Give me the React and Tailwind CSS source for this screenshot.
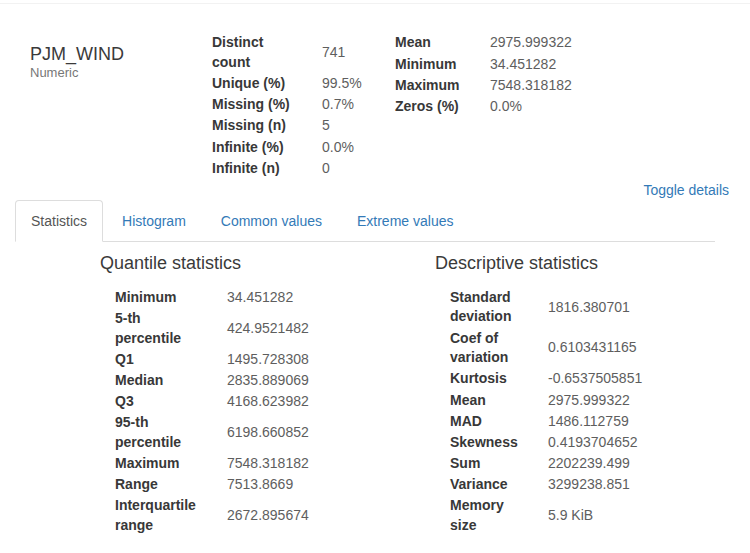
import React from 'react';

const font = { fontFamily: '"Liberation Sans", Arial, sans-serif' };

const overview = [
  ['Distinct count', '741'],
  ['Unique (%)', '99.5%'],
  ['Missing (%)', '0.7%'],
  ['Missing (n)', '5'],
  ['Infinite (%)', '0.0%'],
  ['Infinite (n)', '0'],
];

const summary = [
  ['Mean', '2975.999322'],
  ['Minimum', '34.451282'],
  ['Maximum', '7548.318182'],
  ['Zeros (%)', '0.0%'],
];

const quantiles = [
  ['Minimum', '34.451282'],
  ['5-th percentile', '424.9521482'],
  ['Q1', '1495.728308'],
  ['Median', '2835.889069'],
  ['Q3', '4168.623982'],
  ['95-th percentile', '6198.660852'],
  ['Maximum', '7548.318182'],
  ['Range', '7513.8669'],
  ['Interquartile range', '2672.895674'],
];

const descriptive = [
  ['Standard deviation', '1816.380701'],
  ['Coef of variation', '0.6103431165'],
  ['Kurtosis', '-0.6537505851'],
  ['Mean', '2975.999322'],
  ['MAD', '1486.112759'],
  ['Skewness', '0.4193704652'],
  ['Sum', '2202239.499'],
  ['Variance', '3299238.851'],
  ['Memory size', '5.9 KiB'],
];

// labelClass sets the label column width, which decides where labels wrap
const StatTable = ({ rows, labelClass, className = '' }) => (
  <table className={`text-[14px] leading-[19.5px] ${className}`}>
    <tbody>
      {rows.map(([label, value]) => (
        <tr key={label}>
          <th className={`py-[0.85px] text-left align-middle font-bold text-[#383838] ${labelClass}`}>
            {label}
          </th>
          <td className="py-[0.85px] align-middle text-[#5e5e5e]">{value}</td>
        </tr>
      ))}
    </tbody>
  </table>
);

const tabs = ['Statistics', 'Histogram', 'Common values', 'Extreme values'];

export default function App() {
  return (
    <div className="w-[750px] min-h-[553px] bg-white pt-[3px]" style={font}>
      <div className="border-t border-[#f2f2f2]">
        <div className="flex items-start pt-[28.5px]">
          <div className="w-[212px] pl-[30px] pt-[11px]">
            <div className="text-[18px] leading-[20px] text-[#3a3a3a]">PJM_WIND</div>
            <div className="mt-[0.7px] text-[13px] leading-[18px] text-[#777]">Numeric</div>
          </div>
          <div className="w-[183px]">
            <StatTable rows={overview} labelClass="w-[110px] pr-[24px]" />
          </div>
          <div>
            <StatTable rows={summary} labelClass="w-[95px] pr-[10px]" />
          </div>
        </div>

        <div className="pr-[21px] pt-[1px] text-right text-[14px] leading-[20px]">
          <a className="text-[#337ab7]">Toggle details</a>
        </div>

        <ul className="ml-[15px] mt-[0px] flex w-[700px] border-b border-[#ddd] text-[14px] leading-[20px]">
          {tabs.map((t, i) => (
            <li key={t} className="-mb-px mr-[3px]">
              <a
                className={
                  i === 0
                    ? 'block rounded-t-[4px] border border-[#ddd] border-b-transparent bg-white px-[15px] py-[10px] text-[#555]'
                    : 'block rounded-t-[4px] border border-transparent px-[15px] py-[10px] text-[#337ab7]'
                }
              >
                {t}
              </a>
            </li>
          ))}
        </ul>

        <div className="flex pt-[10.5px]">
          <div className="w-[435px] pl-[100px]">
            <h4 className="text-[18px] leading-[20px] text-[#3a3a3a]">Quantile statistics</h4>
            <StatTable
              rows={quantiles}
              labelClass="w-[112px] pr-[22px]"
              className="ml-[15px] mt-[14.5px]"
            />
          </div>
          <div className="flex-1">
            <h4 className="text-[18px] leading-[20px] text-[#3a3a3a]">Descriptive statistics</h4>
            <StatTable
              rows={descriptive}
              labelClass="w-[98px] pr-[20px]"
              className="ml-[15px] mt-[14.5px]"
            />
          </div>
        </div>
      </div>
    </div>
  );
}
